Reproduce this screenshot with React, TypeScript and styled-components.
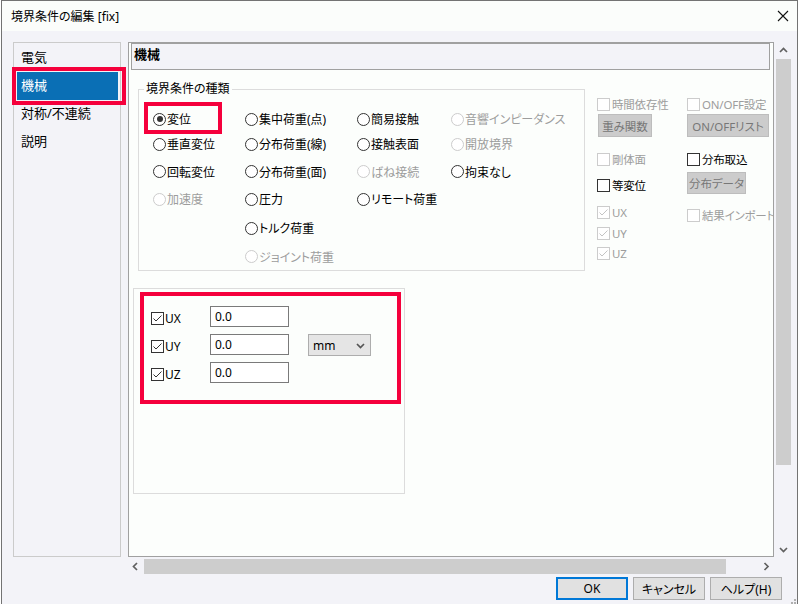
import React from "react";
import styled, { createGlobalStyle } from "styled-components";

const Global = createGlobalStyle`
  html, body { margin: 0; padding: 0; background: #ffffff; }
  body {
    font-family: "Noto Sans", "Noto Sans CJK JP", sans-serif;
    font-size: 12px;
    font-feature-settings: "palt" 1;
    color: #000;
  }
  *, *::before, *::after { box-sizing: border-box; }
`;

const RED = "#f5003c";

const Window = styled.div`
  position: relative;
  width: 797px;
  height: 604px;
  margin-left: 1px;
  border: 1px solid #737373;
  border-bottom: none;
  display: flex;
  flex-direction: column;
  overflow: hidden;
  background: #f3f3f8;
`;

const TitleBar = styled.div`
  height: 30px;
  flex: none;
  background: #fbfdfb;
  display: flex;
  align-items: center;
  justify-content: space-between;
  padding: 0 8px 0 9px;
  font-size: 12px;
`;

const Body = styled.div`
  flex: 1;
  display: flex;
  flex-direction: column;
  padding: 11px 3px 0 11px;
`;

const MainRow = styled.div`
  display: flex;
  gap: 7px;
  height: 533px;
  flex: none;
`;

const NavList = styled.div`
  width: 108px;
  height: 515px;
  border: 1px solid #cbcbcb;
  padding-top: 1px;
  display: flex;
  flex-direction: column;
`;

const NavItem = styled.div<{ $sel?: boolean }>`
  position: relative;
  height: 28px;
  margin: 0 2px 0 3px;
  padding: 0 0 3px 4px;
  display: flex;
  align-items: center;
  font-size: 13px;
  background: ${(p) => (p.$sel ? "#0a6fb5" : "transparent")};
  color: ${(p) => (p.$sel ? "#ffffff" : "#000")};
  ${(p) =>
    p.$sel
      ? `&::after {
    content: "";
    position: absolute;
    left: -5px;
    top: -5px;
    width: 114px;
    height: 38px;
    border: 4px solid ${RED};
  }`
      : ""}
`;

const PanelArea = styled.div`
  flex: 1;
  display: flex;
  flex-direction: column;
`;

const PanelTop = styled.div`
  display: flex;
  height: 515px;
`;

const Viewport = styled.div`
  width: 646px;
  height: 515px;
  border: 1px solid #a0a0a0;
  background: #fcfefc;
  display: flex;
  flex-direction: column;
  overflow: hidden;
`;

const VScroll = styled.div`
  width: 19px;
  display: flex;
  flex-direction: column;
`;

const ArrowCell = styled.div<{ $h?: number; $w?: number }>`
  height: ${(p) => (p.$h ? `${p.$h}px` : "100%")};
  width: ${(p) => (p.$w ? `${p.$w}px` : "100%")};
  display: flex;
  align-items: center;
  justify-content: center;
  flex: none;
`;

const VThumb = styled.div`
  margin: 1px 0 0 2px;
  width: 15px;
  height: 406px;
  background: #cdcdcd;
`;

const Spacer = styled.div`
  flex: 1;
`;

const HScroll = styled.div`
  width: 646px;
  height: 18px;
  display: flex;
  align-items: flex-start;
`;

const HThumb = styled.div`
  margin: 2px 0 0 2px;
  width: 582px;
  height: 15px;
  background: #cdcdcd;
`;

const ButtonRow = styled.div`
  margin-top: 2px;
  height: 23px;
  display: flex;
  justify-content: flex-end;
  gap: 5px;
  padding-right: 12px;
`;

const DlgButton = styled.div<{ $def?: boolean }>`
  width: 72px;
  height: 23px;
  background: #e1e1e1;
  border: ${(p) => (p.$def ? "2px solid #0078d7" : "1px solid #adadad")};
  display: flex;
  align-items: center;
  justify-content: center;
  font-size: 12px;
`;

const Grip = styled.div`
  position: absolute;
  right: 1px;
  bottom: 1px;
  width: 9px;
  height: 9px;
`;

const Header = styled.div`
  height: 27px;
  margin: 0 3px 0 2px;
  border: 1px solid #a0a0a0;
  background: #f3f3f8;
  padding: 2px 0 0 2px;
  font-size: 13px;
  line-height: 16px;
  font-weight: bold;
  flex: none;
`;

const TopRow = styled.div`
  display: flex;
  align-items: flex-start;
  margin-top: 11px;
`;

const Group = styled.fieldset`
  flex: none;
  margin: 0 0 0 9px;
  width: 447px;
  min-width: 0;
  border: 1px solid #dcdcdc;
  padding: 11px 0 0 5px;
`;

const Legend = styled.legend`
  padding: 0 2px;
  font-size: 12px;
  line-height: 16px;
`;

const RadioGrid = styled.div`
  margin-left: 9px;
  display: grid;
  grid-template-columns: 92px 112px 94px 1fr;
  grid-template-rows: 22px 28px 27px 28px 30px 27px;
`;

const RadioItem = styled.div<{ $c: number; $r: number; $dis?: boolean; $mark?: boolean }>`
  position: relative;
  grid-column: ${(p) => p.$c};
  grid-row: ${(p) => p.$r};
  display: flex;
  align-items: center;
  gap: 1px;
  font-size: 12px;
  white-space: nowrap;
  color: ${(p) => (p.$dis ? "#9d9d9d" : "#000")};
  ${(p) =>
    p.$mark
      ? `&::after {
    content: "";
    position: absolute;
    left: -9px;
    top: -6px;
    width: 78px;
    height: 32px;
    border: 4px solid ${RED};
  }`
      : ""}
`;

const Circle = styled.span<{ $dis?: boolean }>`
  width: 13px;
  height: 13px;
  flex: none;
  border-radius: 50%;
  border: 1px solid ${(p) => (p.$dis ? "#cccccc" : "#333333")};
  background: #fff;
  display: inline-flex;
  align-items: center;
  justify-content: center;
`;

const Dot = styled.span`
  width: 6px;
  height: 6px;
  border-radius: 50%;
  background: #333;
`;

const Options = styled.div`
  flex: none;
  display: flex;
  margin: 16px 0 0 12px;
`;

const OptCol = styled.div<{ $w?: number }>`
  display: flex;
  flex-direction: column;
  width: ${(p) => (p.$w ? `${p.$w}px` : "auto")};
`;

const CheckRow = styled.div<{ $mt?: number; $dis?: boolean }>`
  display: flex;
  align-items: center;
  gap: 2px;
  height: 14px;
  margin-top: ${(p) => p.$mt ?? 0}px;
  font-size: 11.5px;
  letter-spacing: -0.2px;
  white-space: nowrap;
  color: ${(p) => (p.$dis ? "#9d9d9d" : "#000")};
`;

const Box = styled.span<{ $dis?: boolean }>`
  width: 13px;
  height: 13px;
  flex: none;
  border: 1px solid ${(p) => (p.$dis ? "#cccccc" : "#333333")};
  background: #fff;
  display: inline-flex;
  align-items: center;
  justify-content: center;
`;

const OptButton = styled.div<{ $w: number; $h: number; $mt: number }>`
  width: ${(p) => p.$w}px;
  height: ${(p) => p.$h}px;
  margin-top: ${(p) => p.$mt}px;
  margin-left: ${(p) => (p.$w === 54 ? 1 : 0)}px;
  background: #cccccc;
  border: 1px solid #bdbdbd;
  color: #777777;
  font-size: 11.5px;
  display: flex;
  align-items: center;
  justify-content: center;
  white-space: nowrap;
`;

const ValueBox = styled.div`
  position: relative;
  margin: 17px 0 0 4px;
  width: 272px;
  height: 206px;
  border: 1px solid #dcdcdc;
  padding: 17px 0 0 17px;
`;

const ValueMark = styled.div`
  position: absolute;
  left: 6px;
  top: 3px;
  width: 261px;
  height: 112px;
  border: 4px solid ${RED};
`;

const ValueGrid = styled.div`
  display: grid;
  grid-template-columns: 59px 79px 63px;
  grid-auto-rows: 21px;
  row-gap: 7px;
`;

const ValueLabel = styled.div`
  display: flex;
  align-items: center;
  gap: 1px;
  font-size: 12px;
  padding-top: 3px;
`;

const Field = styled.div`
  height: 21px;
  border: 1px solid #7a7a7a;
  background: #fff;
  padding-left: 4px;
  display: flex;
  align-items: center;
  font-size: 12px;
`;

const Select = styled.div`
  margin-left: 19px;
  width: 63px;
  height: 22px;
  background: #e5e5e5;
  border: 1px solid #adadad;
  padding: 0 5px 0 4px;
  display: flex;
  align-items: center;
  justify-content: space-between;
  font-size: 12px;
`;

type Dir = "up" | "down" | "left" | "right";
const Chevron = ({ dir, color = "#606060" }: { dir: Dir; color?: string }) => {
  const pts = {
    up: "1,6 4.5,2.5 8,6",
    down: "1,3 4.5,6.5 8,3",
    left: "6,1 2.5,4.5 6,8",
    right: "2.5,1 6,4.5 2.5,8",
  }[dir];
  return (
    <svg width="9" height="9" viewBox="0 0 9 9">
      <polyline points={pts} fill="none" stroke={color} strokeWidth="1.7" />
    </svg>
  );
};

const Check = ({ checked, disabled }: { checked?: boolean; disabled?: boolean }) => (
  <Box $dis={disabled}>
    {checked && (
      <svg width="11" height="11" viewBox="0 0 11 11">
        <polyline
          points="1.5,5.5 4,8 9.5,2.5"
          fill="none"
          stroke={disabled ? "#c4c4c4" : "#333"}
          strokeWidth="1"
        />
      </svg>
    )}
  </Box>
);

const radios: { t: string; c: number; r: number; dis?: boolean; sel?: boolean }[] = [
  { t: "変位", c: 1, r: 1, sel: true },
  { t: "垂直変位", c: 1, r: 2 },
  { t: "回転変位", c: 1, r: 3 },
  { t: "加速度", c: 1, r: 4, dis: true },
  { t: "集中荷重(点)", c: 2, r: 1 },
  { t: "分布荷重(線)", c: 2, r: 2 },
  { t: "分布荷重(面)", c: 2, r: 3 },
  { t: "圧力", c: 2, r: 4 },
  { t: "トルク荷重", c: 2, r: 5 },
  { t: "ジョイント荷重", c: 2, r: 6, dis: true },
  { t: "簡易接触", c: 3, r: 1 },
  { t: "接触表面", c: 3, r: 2 },
  { t: "ばね接続", c: 3, r: 3, dis: true },
  { t: "リモート荷重", c: 3, r: 4 },
  { t: "音響インピーダンス", c: 4, r: 1, dis: true },
  { t: "開放境界", c: 4, r: 2, dis: true },
  { t: "拘束なし", c: 4, r: 3 },
];

export default function App() {
  return (
    <>
      <Global />
      <Window>
        <TitleBar>
          <span>境界条件の編集 [fix]</span>
          <svg width="12" height="12" viewBox="0 0 12 12">
            <path d="M1 1 L11 11 M11 1 L1 11" stroke="#111" strokeWidth="1.1" />
          </svg>
        </TitleBar>
        <Body>
          <MainRow>
            <NavList>
              <NavItem>電気</NavItem>
              <NavItem $sel>機械</NavItem>
              <NavItem>対称/不連続</NavItem>
              <NavItem>説明</NavItem>
            </NavList>
            <PanelArea>
              <PanelTop>
                <Viewport>
                  <Header>機械</Header>
                  <TopRow>
                    <Group>
                      <Legend>境界条件の種類</Legend>
                      <RadioGrid>
                        {radios.map((r) => (
                          <RadioItem key={r.t} $c={r.c} $r={r.r} $dis={r.dis} $mark={r.sel}>
                            <Circle $dis={r.dis}>{r.sel && <Dot />}</Circle>
                            {r.t}
                          </RadioItem>
                        ))}
                      </RadioGrid>
                    </Group>
                    <Options>
                      <OptCol $w={90}>
                        <CheckRow $dis>
                          <Check disabled />
                          時間依存性
                        </CheckRow>
                        <OptButton $w={54} $h={23} $mt={3}>
                          重み関数
                        </OptButton>
                        <CheckRow $dis $mt={15}>
                          <Check disabled />
                          剛体面
                        </CheckRow>
                        <CheckRow $mt={12}>
                          <Check />
                          等変位
                        </CheckRow>
                        <CheckRow $dis $mt={13}>
                          <Check disabled checked />
                          UX
                        </CheckRow>
                        <CheckRow $dis $mt={7}>
                          <Check disabled checked />
                          UY
                        </CheckRow>
                        <CheckRow $dis $mt={6}>
                          <Check disabled checked />
                          UZ
                        </CheckRow>
                      </OptCol>
                      <OptCol>
                        <CheckRow $dis>
                          <Check disabled />
                          ON/OFF設定
                        </CheckRow>
                        <OptButton $w={82} $h={23} $mt={3}>
                          ON/OFFリスト
                        </OptButton>
                        <CheckRow $mt={15}>
                          <Check />
                          分布取込
                        </CheckRow>
                        <OptButton $w={59} $h={22} $mt={6}>
                          分布データ
                        </OptButton>
                        <CheckRow $dis $mt={14}>
                          <Check disabled />
                          結果インポート
                        </CheckRow>
                      </OptCol>
                    </Options>
                  </TopRow>
                  <ValueBox>
                    <ValueGrid>
                      <ValueLabel>
                        <Check checked />
                        UX
                      </ValueLabel>
                      <Field>0.0</Field>
                      <span />
                      <ValueLabel>
                        <Check checked />
                        UY
                      </ValueLabel>
                      <Field>0.0</Field>
                      <Select>
                        <span>mm</span>
                        <Chevron dir="down" color="#555" />
                      </Select>
                      <ValueLabel>
                        <Check checked />
                        UZ
                      </ValueLabel>
                      <Field>0.0</Field>
                      <span />
                    </ValueGrid>
                    <ValueMark />
                  </ValueBox>
                </Viewport>
                <VScroll>
                  <ArrowCell $h={16}>
                    <Chevron dir="up" />
                  </ArrowCell>
                  <VThumb />
                  <Spacer />
                  <ArrowCell $h={16}>
                    <Chevron dir="down" />
                  </ArrowCell>
                </VScroll>
              </PanelTop>
              <HScroll>
                <ArrowCell $w={14} $h={18}>
                  <Chevron dir="left" />
                </ArrowCell>
                <HThumb />
                <Spacer />
                <ArrowCell $w={16} $h={18}>
                  <Chevron dir="right" />
                </ArrowCell>
              </HScroll>
            </PanelArea>
          </MainRow>
          <ButtonRow>
            <DlgButton $def>OK</DlgButton>
            <DlgButton>キャンセル</DlgButton>
            <DlgButton>ヘルプ(H)</DlgButton>
          </ButtonRow>
        </Body>
        <Grip>
          <svg width="9" height="9" viewBox="0 0 9 9">
            <g fill="#b0b0b0">
              <rect x="7" y="1" width="2" height="2" />
              <rect x="4" y="4" width="2" height="2" />
              <rect x="7" y="4" width="2" height="2" />
              <rect x="1" y="7" width="2" height="2" />
              <rect x="4" y="7" width="2" height="2" />
              <rect x="7" y="7" width="2" height="2" />
            </g>
          </svg>
        </Grip>
      </Window>
    </>
  );
}
